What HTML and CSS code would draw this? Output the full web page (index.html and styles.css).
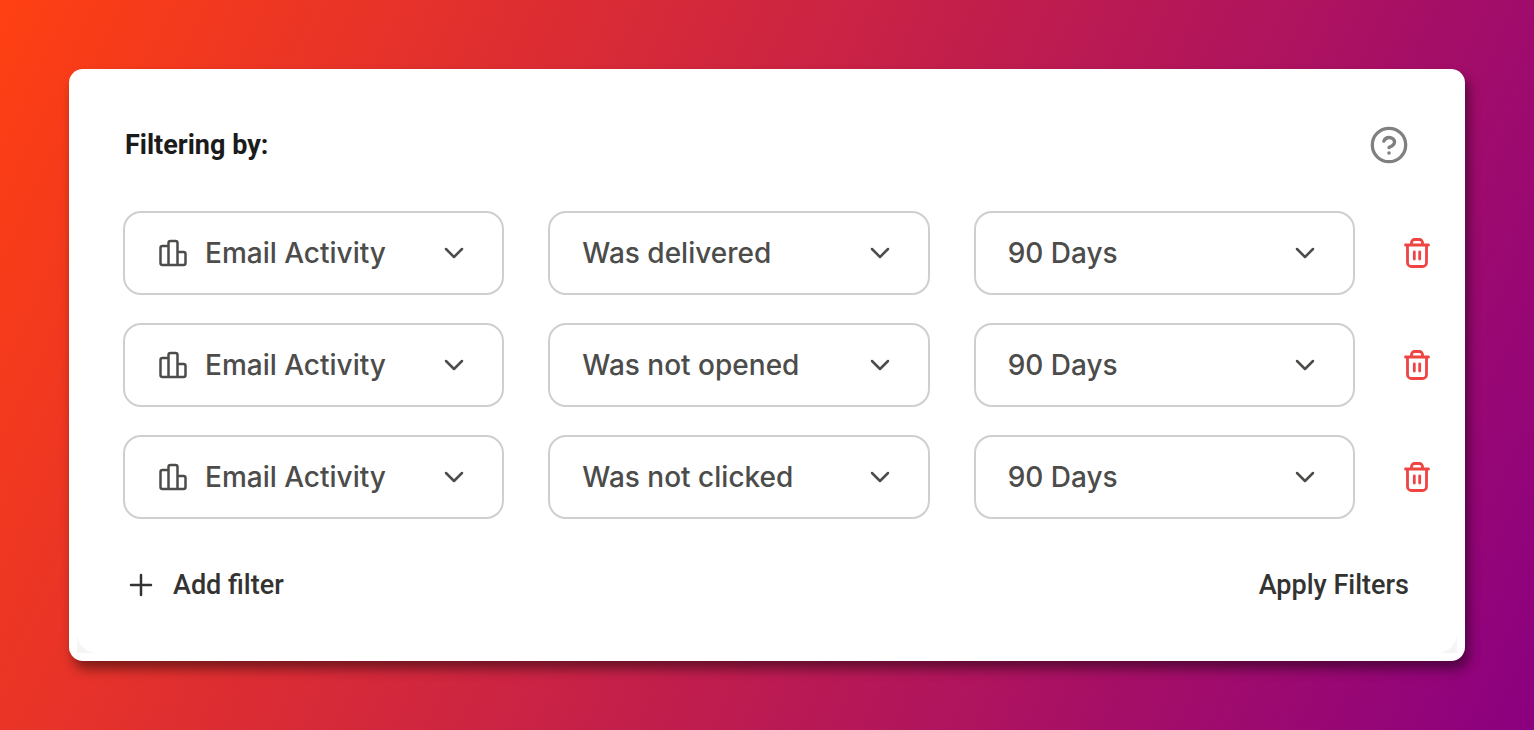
FILE: index.html
```html
<!DOCTYPE html>
<html lang="en">
  <head>
    <meta charset="utf-8">
    <title>Filters</title>
    <meta name="viewport" content="width=device-width, initial-scale=1">
    <link rel="stylesheet" href="styles.css">
  </head>
  <body>
    <!-- Shared icons -->
    <svg class="sprite" aria-hidden="true">
      <symbol id="icon-chart" viewBox="0 0 28 28">
        <path d="M9.5 7H3.5a2 2 0 0 0-2 2v15a2 2 0 0 0 2 2h21a2 2 0 0 0 2-2v-9a2 2 0 0 0-2-2h-6M9.5 26V4a2 2 0 0 1 2-2h5a2 2 0 0 1 2 2v22"/>
      </symbol>
      <symbol id="icon-chevron" viewBox="0 0 24 24">
        <path d="M4 8l8 8 8-8"/>
      </symbol>
      <symbol id="icon-trash" viewBox="0 0 28 32">
        <path d="M2.500 8h23M4.500 8v17.500a4 4 0 0 0 4 4h11a4 4 0 0 0 4-4V8M8.500 8V5.500a3 3 0 0 1 3-3h5a3 3 0 0 1 3 3V8M11.300 15v7M16.700 15v7"/>
      </symbol>
    </svg>

    <main class="card">
      <div class="card-inner">
        <form class="panel">
          <header class="panel-header">
            <h1>Filtering by:</h1>
            <button type="button" class="help" aria-label="Help">
              <svg viewBox="0 0 40 40">
                <circle cx="20" cy="20" r="16.700"/>
                <path d="M14.800 16.300c.8-2.300 2.700-3.800 5.200-3.800 3.200 0 5.500 2 5.500 4.700 0 3.200-3.200 4.200-5.500 5.300"/>
                <circle class="dot" cx="20" cy="28" r="1.800"/>
              </svg>
            </button>
          </header>

          <div class="filters">
            <div class="filter">
              <div class="fields">
                <div class="field has-icon">
                  <svg class="field-icon"><use href="#icon-chart"/></svg>
                  <select aria-label="Filter 1 type"><option>Email Activity</option></select>
                  <svg class="chevron"><use href="#icon-chevron"/></svg>
                </div>
                <div class="field">
                  <select aria-label="Filter 1 condition"><option>Was delivered</option><option>Was not opened</option><option>Was not clicked</option></select>
                  <svg class="chevron"><use href="#icon-chevron"/></svg>
                </div>
                <div class="field">
                  <select aria-label="Filter 1 period"><option>90 Days</option></select>
                  <svg class="chevron"><use href="#icon-chevron"/></svg>
                </div>
              </div>
              <button type="button" class="delete" aria-label="Delete filter 1"><svg><use href="#icon-trash"/></svg></button>
            </div>

            <div class="filter">
              <div class="fields">
                <div class="field has-icon">
                  <svg class="field-icon"><use href="#icon-chart"/></svg>
                  <select aria-label="Filter 2 type"><option>Email Activity</option></select>
                  <svg class="chevron"><use href="#icon-chevron"/></svg>
                </div>
                <div class="field">
                  <select aria-label="Filter 2 condition"><option>Was delivered</option><option selected>Was not opened</option><option>Was not clicked</option></select>
                  <svg class="chevron"><use href="#icon-chevron"/></svg>
                </div>
                <div class="field">
                  <select aria-label="Filter 2 period"><option>90 Days</option></select>
                  <svg class="chevron"><use href="#icon-chevron"/></svg>
                </div>
              </div>
              <button type="button" class="delete" aria-label="Delete filter 2"><svg><use href="#icon-trash"/></svg></button>
            </div>

            <div class="filter">
              <div class="fields">
                <div class="field has-icon">
                  <svg class="field-icon"><use href="#icon-chart"/></svg>
                  <select aria-label="Filter 3 type"><option>Email Activity</option></select>
                  <svg class="chevron"><use href="#icon-chevron"/></svg>
                </div>
                <div class="field">
                  <select aria-label="Filter 3 condition"><option>Was delivered</option><option>Was not opened</option><option selected>Was not clicked</option></select>
                  <svg class="chevron"><use href="#icon-chevron"/></svg>
                </div>
                <div class="field">
                  <select aria-label="Filter 3 period"><option>90 Days</option></select>
                  <svg class="chevron"><use href="#icon-chevron"/></svg>
                </div>
              </div>
              <button type="button" class="delete" aria-label="Delete filter 3"><svg><use href="#icon-trash"/></svg></button>
            </div>
          </div>

          <footer class="panel-footer">
            <button type="button" class="text-button">
              <svg viewBox="0 0 32 32"><path d="M16 6v20M6 16h20"/></svg>
              Add filter
            </button>
            <button type="submit" class="text-button">Apply Filters</button>
          </footer>
        </form>
      </div>
    </main>
  </body>
</html>
```

FILE: styles.css
```css
* {
  box-sizing: border-box;
}

body {
  margin: 0;
  min-height: 100vh;
  padding: 69px;
  background: linear-gradient(115deg, #ff4012, #8b0080);
  font-family: Inter, "Liberation Sans", sans-serif;
  color: #4c4c4a;
}

button {
  padding: 0;
  border: 0;
  background: none;
  cursor: pointer;
}

svg {
  display: block;
  fill: none;
  stroke: currentColor;
  stroke-width: 2.5;
  stroke-linecap: round;
  stroke-linejoin: round;
}

.sprite {
  position: absolute;
  width: 0;
  height: 0;
}

.card {
  padding: 8px;
  background: #fff;
  border-radius: 14px;
  box-shadow: 4px 8px 12px rgba(0, 0, 0, 0.45);
}

/* only shows behind the bottom corners of the panel */
.card-inner {
  background: linear-gradient(#fff 50%, #f5f5f5);
}

.panel {
  padding: 48px 26px 50px 46px;
  background: #fff;
  border-radius: 20px;
}

.panel-header,
.panel-footer {
  display: flex;
  align-items: center;
  justify-content: space-between;
  padding: 0 22px 0 2px;
}

.panel-header {
  margin-bottom: 46px;
}

.panel-header h1 {
  margin: 0;
  font-family: Roboto, "Liberation Sans", sans-serif;
  font-size: 27px;
  line-height: 36px;
  font-weight: 700;
  color: #1b1b1b;
}

.help {
  color: #80807f;
}

.help svg {
  width: 40px;
  height: 40px;
  stroke-width: 3.3;
}

.help .dot {
  fill: currentColor;
  stroke: none;
}

/* Filter rows */
.filters {
  display: flex;
  flex-direction: column;
  gap: 28px;
}

.filter {
  display: flex;
  align-items: center;
  gap: 48px;
}

.fields {
  flex: 1;
  display: grid;
  grid-template-columns: repeat(3, 1fr);
  gap: 44px;
}

.field {
  position: relative;
}

.field select {
  display: block;
  width: 100%;
  height: 84px;
  padding: 0 72px 0 32px;
  appearance: none;
  border: 2px solid #cfcfcf;
  border-radius: 18px;
  background: #fff;
  color: inherit;
  font-family: inherit;
  font-size: 28px;
  font-weight: 500;
  cursor: pointer;
}

.field.has-icon select {
  padding-left: 80px;
}

.field-icon,
.chevron {
  position: absolute;
  top: 28px;
  pointer-events: none;
}

.field-icon {
  left: 36px;
  width: 28px;
  height: 28px;
}

.chevron {
  top: 30px;
  right: 38px;
  width: 24px;
  height: 24px;
}

.delete {
  color: #ef4444;
}

.delete svg {
  width: 28px;
  height: 32px;
  stroke-width: 2.8;
}

.panel-footer {
  margin-top: 48px;
}

.text-button {
  display: flex;
  align-items: center;
  gap: 16px;
  font-family: Roboto, "Liberation Sans", sans-serif;
  font-size: 27px;
  line-height: 36px;
  font-weight: 500;
  color: #333332;
}

.text-button svg {
  width: 32px;
  height: 32px;
}
```
